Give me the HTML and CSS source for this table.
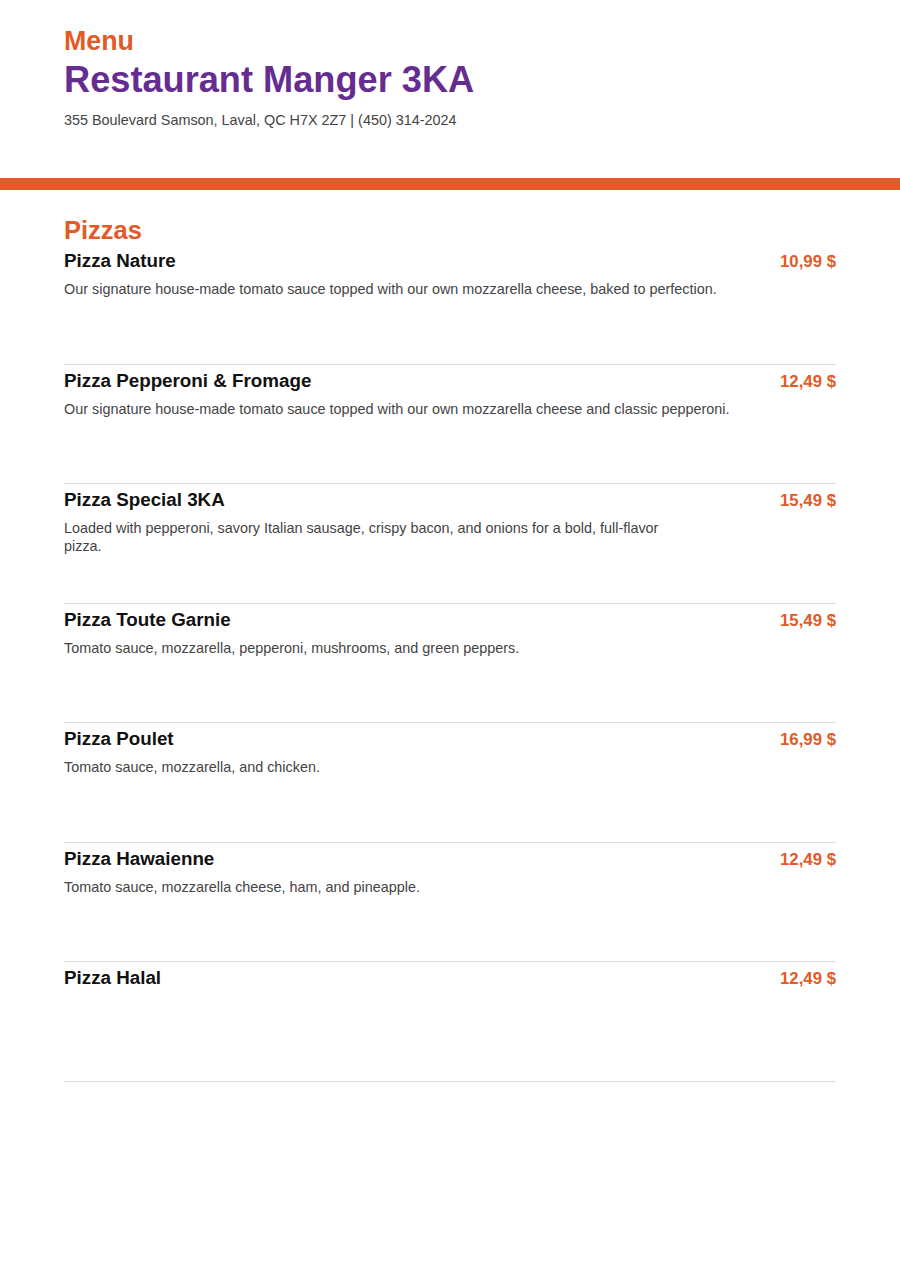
FILE: index.html
```html
<!DOCTYPE html>
<html lang="fr">
<head>
<meta charset="utf-8">
<title>Menu - Restaurant Manger 3KA</title>
<link rel="stylesheet" href="styles.css">
</head>
<body>
<header class="header">
  <div class="kicker">Menu</div>
  <h1 class="title">Restaurant Manger 3KA</h1>
  <p class="address">355 Boulevard Samson, Laval, QC H7X 2Z7 | (450) 314-2024</p>
</header>
<div class="bar"></div>
<main class="content">
  <h2 class="section-title">Pizzas</h2>
  <ul class="items">
    <li class="item">
      <div class="item-main">
        <h3 class="item-name">Pizza Nature</h3>
        <p class="item-desc">Our signature house-made tomato sauce topped with our own mozzarella cheese, baked to perfection.</p>
      </div>
      <span class="price">10,99 $</span>
    </li>
    <li class="item">
      <div class="item-main">
        <h3 class="item-name">Pizza Pepperoni &amp; Fromage</h3>
        <p class="item-desc">Our signature house-made tomato sauce topped with our own mozzarella cheese and classic pepperoni.</p>
      </div>
      <span class="price">12,49 $</span>
    </li>
    <li class="item">
      <div class="item-main">
        <h3 class="item-name">Pizza Special 3KA</h3>
        <p class="item-desc item-desc-narrow">Loaded with pepperoni, savory Italian sausage, crispy bacon, and onions for a bold, full-flavor pizza.</p>
      </div>
      <span class="price">15,49 $</span>
    </li>
    <li class="item">
      <div class="item-main">
        <h3 class="item-name">Pizza Toute Garnie</h3>
        <p class="item-desc">Tomato sauce, mozzarella, pepperoni, mushrooms, and green peppers.</p>
      </div>
      <span class="price">15,49 $</span>
    </li>
    <li class="item">
      <div class="item-main">
        <h3 class="item-name">Pizza Poulet</h3>
        <p class="item-desc">Tomato sauce, mozzarella, and chicken.</p>
      </div>
      <span class="price">16,99 $</span>
    </li>
    <li class="item">
      <div class="item-main">
        <h3 class="item-name">Pizza Hawaienne</h3>
        <p class="item-desc">Tomato sauce, mozzarella cheese, ham, and pineapple.</p>
      </div>
      <span class="price">12,49 $</span>
    </li>
    <li class="item">
      <div class="item-main">
        <h3 class="item-name">Pizza Halal</h3>
      </div>
      <span class="price">12,49 $</span>
    </li>
  </ul>
</main>
</body>
</html>
```
FILE: styles.css
```css
* { box-sizing: border-box; }
html, body { margin: 0; padding: 0; background: #fff; }
body {
  font-family: "Liberation Sans", Arial, sans-serif;
  color: #111;
}
.header {
  padding: 27px 64px 0;
  height: 178px;
}
.kicker {
  color: #e35a27;
  font-weight: 700;
  font-size: 26.8px;
  line-height: 28px;
}
.title {
  margin: 4px 0 0;
  color: #662d91;
  font-weight: 700;
  font-size: 36.2px;
  line-height: 42px;
}
.address {
  margin: 11px 0 0;
  font-size: 14.4px;
  line-height: 17px;
  color: #444;
}
.bar {
  height: 12px;
  background: #e35a27;
}
.content {
  padding: 25px 64px 0;
}
.section-title {
  margin: 0;
  color: #e35a27;
  font-size: 25.5px;
  line-height: 30px;
  font-weight: 700;
}
.items {
  list-style: none;
  margin: 0;
  padding: 0;
}
.item {
  display: flex;
  justify-content: space-between;
  align-items: flex-start;
  height: 119.5px;
  padding-top: 5px;
  border-bottom: 1px solid #ddd;
}
.item-name {
  margin: 0;
  font-size: 18.8px;
  line-height: 22px;
  font-weight: 700;
  color: #111;
}
.item-desc {
  margin: 8px 0 0;
  font-size: 14.4px;
  line-height: 18px;
  color: #444;
}
.item-desc-narrow {
  max-width: 600px;
}
.price {
  color: #e35a27;
  font-weight: 700;
  font-size: 16.8px;
  line-height: 24px;
}
```
